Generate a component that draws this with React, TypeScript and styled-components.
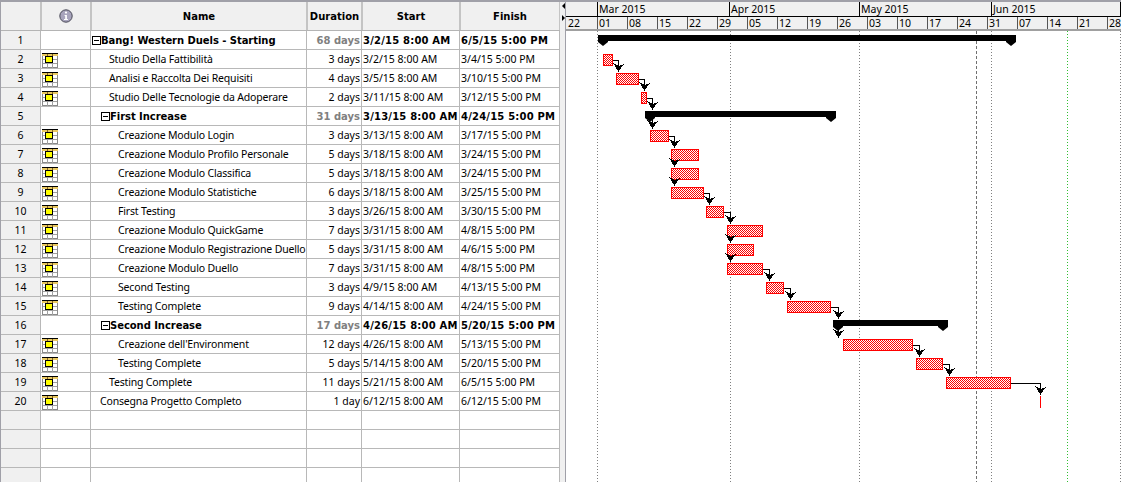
import React from "react";
import styled, { createGlobalStyle } from "styled-components";

const Global = createGlobalStyle`
  html, body { margin: 0; padding: 0; background: #fff; overflow: hidden; }
  #root { width: 1121px; height: 482px; overflow: hidden; }
`;

const Page = styled.div`
  display: flex;
  width: 1121px;
  height: 482px;
  border-top: 2px solid #a0a0a8;
  box-sizing: border-box;
  font-family: "Noto Sans", "Open Sans", sans-serif;
  font-size: 10.5px;
  color: #000;
  background: #fff;
`;

const Table = styled.div`
  width: 560px;
  flex: none;
  overflow: hidden;
  border-left: 1px solid #a0a0a8;
  box-sizing: border-box;
`;

const HeaderRow = styled.div`
  display: grid;
  grid-template-columns: 41px 50px 216px 55px 98px 100px;
  height: 29px;
  background: #f0f0f0;
  border-bottom: 1px solid #b4b4b4;
  box-sizing: border-box;
`;

const HeaderCell = styled.div`
  display: flex;
  align-items: center;
  justify-content: center;
  font-weight: 700;
  font-family: "DejaVu Sans", sans-serif;
  font-size: 10px;
  border-right: 2px solid #c4c4c4;
  box-sizing: border-box;
`;

const Row = styled.div`
  display: grid;
  grid-template-columns: 40px 50px 216px 55px 98px 100px;
  height: 19px;
  border-bottom: 1px solid #b8b8b8;
  box-sizing: border-box;
`;

const Cell = styled.div<{ $bold?: boolean }>`
  display: flex;
  align-items: center;
  white-space: nowrap;
  overflow: hidden;
  border-right: 1px solid #b8b8b8;
  box-sizing: border-box;
  ${(p) => p.$bold && `font-weight: 700; font-family: "DejaVu Sans", sans-serif; font-size: 10px;`}
`;

const NumCell = styled(Cell)`
  justify-content: center;
  background: #f0f0f0;
`;

const IconCell = styled(Cell)`
  padding: 2px 0 0 1px;
`;

const NameCell = styled(Cell)<{ $indent: number }>`
  padding-left: ${(p) => p.$indent}px;
  letter-spacing: ${(p) => (p.$bold ? "-0.05px" : "-0.17px")};
`;

const DurationCell = styled(Cell)<{ $muted?: boolean }>`
  justify-content: flex-end;
  padding-right: 1px;
  ${(p) => p.$muted && `color: #808080;`}
`;

const DateCell = styled(Cell)`
  padding-left: 1px;
  letter-spacing: ${(p) => (p.$bold ? "0.2px" : "0")};
`;

const Collapse = styled.span`
  display: inline-block;
  flex: none;
  width: 7px;
  height: 7px;
  border: 1px solid #000;
  position: relative;
  &::after {
    content: "";
    position: absolute;
    left: 1px;
    right: 1px;
    top: 3px;
    height: 1px;
    background: #000;
  }
`;

const Splitter = styled.div`
  width: 6px;
  flex: none;
  background: #f0f0f0;
  border-right: 1px solid #a0a0a8;
  box-sizing: border-box;
  display: flex;
  flex-direction: column;
  align-items: flex-start;
  gap: 6px;
  padding: 1px 0 0 2px;
`;

const Chart = styled.div`
  flex: 1;
  display: flex;
  flex-direction: column;
  min-width: 0;
`;

const Timescale = styled.div`
  flex: none;
  height: 27px;
  background: #f0f0f0;
  border-bottom: 2px solid #a0a0a0;
  font-family: "Noto Sans", sans-serif;
  font-size: 10.5px;
`;

const Months = styled.div`
  display: flex;
  height: 14px;
  border-bottom: 1px solid #000;
`;

const Month = styled.div<{ $w: number }>`
  width: ${(p) => p.$w}px;
  flex: none;
  border-right: 1px solid #000;
  box-sizing: border-box;
  line-height: 14px;
  padding-left: 1px;
  white-space: nowrap;
  overflow: hidden;
`;

const Weeks = styled.div`
  display: flex;
  height: 12px;
`;

const Week = styled.div<{ $w: number; $first?: boolean }>`
  width: ${(p) => p.$w}px;
  flex: none;
  border-right: 1px solid #555;
  box-sizing: border-box;
  line-height: 13px;
  padding-left: ${(p) => (p.$first ? "2px" : "1px")};
  overflow: hidden;
`;

const ChartBody = styled.svg`
  display: block;
  flex: none;
`;

type Task = { id: number; name: string; dur: string; start: string; finish: string; indent: number; summary?: boolean };

const tasks: Task[] = [
  { id: 1, name: "Bang! Western Duels - Starting", dur: "68 days", start: "3/2/15 8:00 AM", finish: "6/5/15 5:00 PM", indent: 1, summary: true },
  { id: 2, name: "Studio Della Fattibilità", dur: "3 days", start: "3/2/15 8:00 AM", finish: "3/4/15 5:00 PM", indent: 18 },
  { id: 3, name: "Analisi e Raccolta Dei Requisiti", dur: "4 days", start: "3/5/15 8:00 AM", finish: "3/10/15 5:00 PM", indent: 18 },
  { id: 4, name: "Studio Delle Tecnologie da Adoperare", dur: "2 days", start: "3/11/15 8:00 AM", finish: "3/12/15 5:00 PM", indent: 18 },
  { id: 5, name: "First Increase", dur: "31 days", start: "3/13/15 8:00 AM", finish: "4/24/15 5:00 PM", indent: 10, summary: true },
  { id: 6, name: "Creazione Modulo Login", dur: "3 days", start: "3/13/15 8:00 AM", finish: "3/17/15 5:00 PM", indent: 27 },
  { id: 7, name: "Creazione Modulo Profilo Personale", dur: "5 days", start: "3/18/15 8:00 AM", finish: "3/24/15 5:00 PM", indent: 27 },
  { id: 8, name: "Creazione Modulo Classifica", dur: "5 days", start: "3/18/15 8:00 AM", finish: "3/24/15 5:00 PM", indent: 27 },
  { id: 9, name: "Creazione Modulo Statistiche", dur: "6 days", start: "3/18/15 8:00 AM", finish: "3/25/15 5:00 PM", indent: 27 },
  { id: 10, name: "First Testing", dur: "3 days", start: "3/26/15 8:00 AM", finish: "3/30/15 5:00 PM", indent: 27 },
  { id: 11, name: "Creazione Modulo QuickGame", dur: "7 days", start: "3/31/15 8:00 AM", finish: "4/8/15 5:00 PM", indent: 27 },
  { id: 12, name: "Creazione Modulo Registrazione Duello", dur: "5 days", start: "3/31/15 8:00 AM", finish: "4/6/15 5:00 PM", indent: 27 },
  { id: 13, name: "Creazione Modulo Duello", dur: "7 days", start: "3/31/15 8:00 AM", finish: "4/8/15 5:00 PM", indent: 27 },
  { id: 14, name: "Second Testing", dur: "3 days", start: "4/9/15 8:00 AM", finish: "4/13/15 5:00 PM", indent: 27 },
  { id: 15, name: "Testing Complete", dur: "9 days", start: "4/14/15 8:00 AM", finish: "4/24/15 5:00 PM", indent: 27 },
  { id: 16, name: "Second Increase", dur: "17 days", start: "4/26/15 8:00 AM", finish: "5/20/15 5:00 PM", indent: 10, summary: true },
  { id: 17, name: "Creazione dell'Environment", dur: "12 days", start: "4/26/15 8:00 AM", finish: "5/13/15 5:00 PM", indent: 27 },
  { id: 18, name: "Testing Complete", dur: "5 days", start: "5/14/15 8:00 AM", finish: "5/20/15 5:00 PM", indent: 27 },
  { id: 19, name: "Testing Complete", dur: "11 days", start: "5/21/15 8:00 AM", finish: "6/5/15 5:00 PM", indent: 18 },
  { id: 20, name: "Consegna Progetto Completo", dur: "1 day", start: "6/12/15 8:00 AM", finish: "6/12/15 5:00 PM", indent: 9 },
];

const TaskIcon = () => (
  <svg width="16" height="15" viewBox="0 0 16 15" shapeRendering="crispEdges">
    <rect x="0.5" y="0.5" width="15" height="14" fill="#fff" stroke="#8a8a8a" />
    <path d="M5.5 3V15M10.5 3V15M1 6.5H15M1 10.5H15" stroke="#a0a0a0" fill="none" />
    <rect x="0" y="0" width="16" height="1" fill="#000" />
    <rect x="0" y="1" width="16" height="2" fill="#e8c860" />
    <path d="M5.5 1V3M10.5 1V3" stroke="#806020" fill="none" />
    <rect x="3.5" y="3.5" width="7" height="6" fill="#ffff00" stroke="#000" />
  </svg>
);

const InfoIcon = () => (
  <svg width="14" height="14" viewBox="0 0 14 14">
    <circle cx="7" cy="7" r="6.2" fill="#a8a4bc" stroke="#4a4a58" />
    <circle cx="7" cy="3.6" r="1.1" fill="#fff" />
    <path d="M5.6 6h2.3v4h1v1H5v-1h1.2V7H5.6z" fill="#fff" />
  </svg>
);

const Tri = ({ dir }: { dir: "l" | "r" }) => (
  <svg width="3" height="6" viewBox="0 0 3 6">
    <path d={dir === "l" ? "M3 0V6L0 3z" : "M0 0V6L3 3z"} fill="#000" />
  </svg>
);

const monthsData = [
  { w: 32, label: "" },
  { w: 132, label: "Mar 2015" },
  { w: 130, label: "Apr 2015" },
  { w: 132, label: "May 2015" },
  { w: 129, label: "Jun 2015" },
];
const weekLabels = ["22", "01", "08", "15", "22", "29", "05", "12", "19", "26", "03", "10", "17", "24", "31", "07", "14", "21", "28"];

const OX = 566;
const OY = 31;
const bars: [number, number, number][] = [
  [2, 603, 613], [3, 616, 639], [4, 641, 647], [6, 650, 669], [7, 671, 699], [8, 671, 699], [9, 671, 704],
  [10, 706, 724], [11, 727, 763], [12, 727, 754], [13, 727, 763], [14, 766, 784], [15, 787, 831],
  [17, 843, 913], [18, 916, 943], [19, 946, 1011],
];
const summaries: [number, number, number][] = [[1, 598, 1016], [5, 645, 836], [16, 833, 948]];
const rowTop = (r: number) => 30 + 19 * (r - 1);

const links: [number, number, number, number][] = [
  [613, 60, 618, 72], [639, 79, 644, 91], [647, 98, 652, 110], [652, 118, 652, 129],
  [669, 136, 674, 148], [674, 161, 674, 167], [674, 180, 674, 186], [704, 193, 709, 205],
  [724, 212, 730, 224], [730, 237, 730, 243], [730, 256, 730, 262], [763, 269, 769, 281],
  [784, 288, 790, 300], [831, 307, 838, 319], [838, 327, 838, 338], [913, 345, 919, 357],
  [943, 364, 949, 376], [1011, 383, 1040, 395],
];

const grid: [number, string, string][] = [
  [597, "#808080", "1 2"], [730, "#808080", "1 2"], [859, "#808080", "1 2"], [976, "#707070", "3 2"],
  [991, "#808080", "1 2"], [1067, "#30c030", "1 2"], [1120, "#808080", "1 2"],
];

const Gantt = () => (
  <ChartBody width={555} height={451} viewBox={`${OX} ${OY} 555 451`} shapeRendering="crispEdges">
    <defs>
      <pattern id="dither" x="0" y="0" width="2" height="2" patternUnits="userSpaceOnUse">
        <rect width="2" height="2" fill="#fff" />
        <rect width="1" height="1" fill="#f00" />
        <rect x="1" y="1" width="1" height="1" fill="#f00" />
      </pattern>
    </defs>
    {grid.map(([x, c, d]) => (
      <line key={x} x1={x + 0.5} x2={x + 0.5} y1={OY} y2={482} stroke={c} strokeDasharray={d} />
    ))}
    {links.map(([x1, y1, x2, y2], i) => (
      <path key={"l" + i} d={`M${x1} ${y1 + 0.5}H${x2 + 0.5}V${y2}`} stroke="#000" fill="none" />
    ))}
    {bars.map(([r, a, b]) => (
      <rect key={r} x={a + 0.5} y={rowTop(r) + 5.5} width={b - a - 1} height={11} fill="url(#dither)" stroke="#f00" />
    ))}
    {summaries.map(([r, a, b]) => {
      const t = rowTop(r) + 5;
      return (
        <path
          key={r}
          shapeRendering="auto"
          d={`M${a} ${t}H${b}V${t + 7}L${b - 5} ${t + 11}L${b - 10} ${t + 7}V${t + 6}H${a + 10}V${t + 7}L${a + 5} ${t + 11}L${a} ${t + 7}z`}
          fill="#000"
        />
      );
    })}
    {links.map(([, , x2, y2], i) => (
      <path
        key={"a" + i}
        d={`M${x2 + 0.5} ${y2}L${x2 + 3.5} ${y2 - 5}L${x2 + 6} ${y2 - 8}L${x2 + 0.5} ${y2 - 6}L${x2 - 5} ${y2 - 9}L${x2 - 2.5} ${y2 - 5}z`}
        fill="#000"
      />
    ))}
    <line x1={1040.5} x2={1040.5} y1={396} y2={408} stroke="#f00" />
  </ChartBody>
);

export default function App() {
  return (
    <Page>
      <Global />
      <Table>
        <HeaderRow>
          <HeaderCell />
          <HeaderCell><InfoIcon /></HeaderCell>
          <HeaderCell>Name</HeaderCell>
          <HeaderCell>Duration</HeaderCell>
          <HeaderCell>Start</HeaderCell>
          <HeaderCell>Finish</HeaderCell>
        </HeaderRow>
        {tasks.map((t) => (
          <Row key={t.id}>
            <NumCell>{t.id}</NumCell>
            <IconCell>{!t.summary && <TaskIcon />}</IconCell>
            <NameCell $indent={t.indent} $bold={t.summary}>
              {t.summary && <Collapse />}
              {t.name}
            </NameCell>
            <DurationCell $bold={t.summary} $muted={t.summary}>{t.dur}</DurationCell>
            <DateCell $bold={t.summary}>{t.start}</DateCell>
            <DateCell $bold={t.summary}>{t.finish}</DateCell>
          </Row>
        ))}
        {[0, 1, 2, 3].map((i) => (
          <Row key={"e" + i}>
            <NumCell />
            <Cell />
            <Cell />
            <Cell />
            <Cell />
            <Cell />
          </Row>
        ))}
      </Table>
      <Splitter>
        <Tri dir="l" />
        <Tri dir="r" />
      </Splitter>
      <Chart>
        <Timescale>
          <Months>
            {monthsData.map((m, i) => (
              <Month key={i} $w={m.w}>{m.label}</Month>
            ))}
          </Months>
          <Weeks>
            {weekLabels.map((w, i) => (
              <Week key={i} $w={i === 0 ? 32 : 30} $first={i === 0}>{w}</Week>
            ))}
          </Weeks>
        </Timescale>
        <Gantt />
      </Chart>
    </Page>
  );
}
